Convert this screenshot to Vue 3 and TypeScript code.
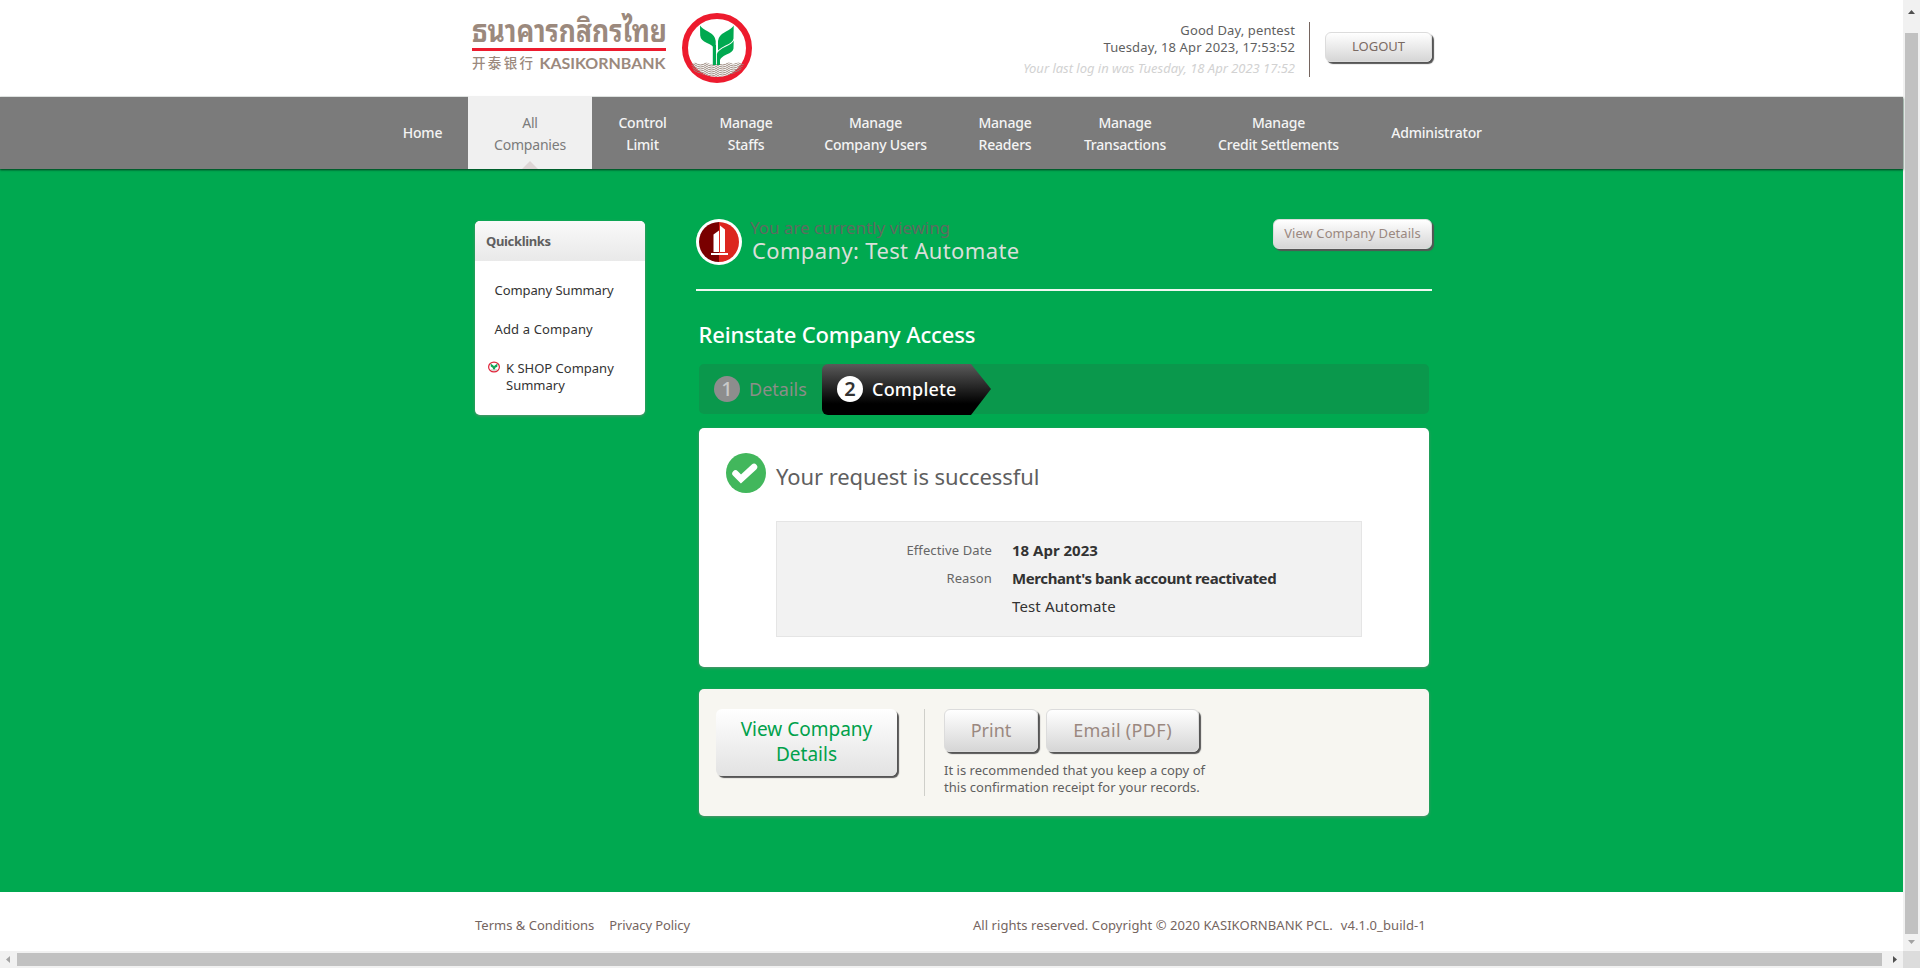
<script setup lang="ts">
interface NavItem { lines: string[]; width: number; active?: boolean }

const nav: NavItem[] = [
  { lines: ['Home'], width: 91 },
  { lines: ['All', 'Companies'], width: 124, active: true },
  { lines: ['Control', 'Limit'], width: 101 },
  { lines: ['Manage', 'Staffs'], width: 106 },
  { lines: ['Manage', 'Company Users'], width: 153 },
  { lines: ['Manage', 'Readers'], width: 106 },
  { lines: ['Manage', 'Transactions'], width: 134 },
  { lines: ['Manage', 'Credit Settlements'], width: 173 },
  { lines: ['Administrator'], width: 143 },
]

const details = [
  { label: 'Effective Date', value: '18 Apr 2023', kind: 'date' },
  { label: 'Reason', value: "Merchant's bank account reactivated", kind: 'reason' },
  { label: '', value: 'Test Automate', kind: 'plain' },
]
</script>

<template>
  <div class="window">
    <div class="page">
      <header class="header">
        <svg class="logo" width="290" height="96" viewBox="0 0 290 96">
          <g fill="#9b897d">
            <text class="thai" x="0" y="41.5" textLength="195" lengthAdjust="spacingAndGlyphs">ธนาคารกสิกรไทย</text>
            <text class="chinese" x="0" y="67.5" textLength="61">开泰银行</text>
            <text class="latin" x="67.5" y="68.5" textLength="126" lengthAdjust="spacingAndGlyphs">KASIKORNBANK</text>
          </g>
          <rect x="0" y="48" width="194" height="3" fill="#ed1b2e" />
          <clipPath id="water"><path d="M219 64q5-3 10 0 5-3 9 0h14q5-3 9 0 6-3 11 0l-4 7q-9 5-23 6-14-1-23-6z" /></clipPath>
          <circle cx="245" cy="48" r="32" fill="#fff" stroke="#ed1b2e" stroke-width="6" />
          <g clip-path="url(#water)" fill="none" stroke="#9b897d" stroke-width="1">
            <path v-for="n in 9" :key="n" :transform="`translate(0 ${(n - 1) * 2})`" d="M212 63q5.500-4 11 0t11 0 11 0 11 0 11 0 11 0" />
          </g>
          <g fill="#00a950">
            <path d="M228 25.500Q230 28.500 236 31.500 243.500 35.500 243.700 41V65H241.800V48Q241 45.500 235 43 228.500 40 228.200 35.500z" />
            <path d="M240.800 45h3.200v20h-3.200z" />
            <path d="M261.700 25.500Q260 28.500 254 31.500 246.300 35.500 246 41V50.500Q248.500 48 253.500 45.500 261 42.500 261.500 38.500z" />
            <path d="M261.700 40.500Q260.500 43.500 254 46.500 246 50 244.900 54V65H248V60Q249 57 254.500 54.500 261 52 261.500 48.500z" />
          </g>
        </svg>
        <div class="session">
          <p class="greeting">Good Day, pentest</p>
          <p class="now">Tuesday, 18 Apr 2023, 17:53:52</p>
          <p class="last">Your last log in was Tuesday, 18 Apr 2023 17:52</p>
        </div>
        <button class="btn logout">LOGOUT</button>
      </header>

      <nav class="nav">
        <a v-for="(item, i) in nav" :key="i" class="nav-item" :class="{ active: item.active, double: item.lines.length > 1 }" :style="{ width: item.width + 'px' }">
          <span v-for="line in item.lines" :key="line">{{ line }}</span>
        </a>
      </nav>

      <main class="main">
        <aside class="quick">
          <h2>Quicklinks</h2>
          <a>Company Summary</a>
          <a class="add">Add a Company</a>
          <a class="shop">
            <svg width="12" height="12" viewBox="0 0 12 12">
              <ellipse cx="6" cy="6" rx="5.400" ry="4.900" fill="#fff" stroke="#e0243a" stroke-width="1.200" />
              <path d="M2.600 2.500 5.700 4.800 6 5.500l.4-.7 3.100-2.300-.2 3.200-2 1-.4 1.900H5.200L4.700 6.700 2.800 5.500z" fill="#12a557" />
              <path d="M3 9h6" stroke="#b9b0aa" />
            </svg>
            <span>K SHOP Company<br>Summary</span>
          </a>
        </aside>

        <section class="content">
          <div class="company">
            <svg width="46" height="46" viewBox="0 0 46 46">
              <circle cx="23" cy="23" r="23" fill="#fff" />
              <path d="M23 3a20 20 0 0 0 0 40z" fill="#790000" />
              <path d="M23 3a20 20 0 0 1 0 40z" fill="#dc261f" />
              <path d="M17.500 15.500 23 11.500V33h-5.500zM24 6.500l5 4V33h-5zM15 34h17v2H15z" fill="#fff" />
            </svg>
            <div class="company-text">
              <p class="viewing">You are currently viewing</p>
              <p class="company-name">Company: Test Automate</p>
            </div>
            <button class="btn view-small">View Company Details</button>
          </div>

          <h1>Reinstate Company Access</h1>

          <div class="steps">
            <div class="step done"><b>1</b><span>Details</span></div>
            <div class="step current"><b>2</b><span>Complete</span></div>
          </div>

          <div class="card result">
            <div class="result-head">
              <svg width="40" height="40" viewBox="0 0 40 40">
                <circle cx="20" cy="20" r="20" fill="#42b75c" />
                <path d="M9.500 20.500 15 26 28 14" fill="none" stroke="#fff" stroke-width="6.500" stroke-linejoin="miter" stroke-linecap="round" />
              </svg>
              <h2>Your request is successful</h2>
            </div>
            <dl class="details">
              <div v-for="d in details" :key="d.value" class="detail">
                <dt>{{ d.label }}</dt>
                <dd :class="d.kind">{{ d.value }}</dd>
              </div>
            </dl>
          </div>

          <div class="card actions">
            <button class="btn view-big">View Company<br>Details</button>
            <div class="receipt">
              <div class="receipt-buttons">
                <button class="btn print">Print</button>
                <button class="btn email">Email (PDF)</button>
              </div>
              <p>It is recommended that you keep a copy of<br>this confirmation receipt for your records.</p>
            </div>
          </div>
        </section>
      </main>

      <footer class="footer">
        <a>Terms &amp; Conditions</a>
        <a class="privacy">Privacy Policy</a>
        <span class="rights">All rights reserved. Copyright © 2020 KASIKORNBANK PCL.</span>
        <span class="version">v4.1.0_build-1</span>
      </footer>
    </div>

    <div class="vbar">
      <svg width="17" height="33"><path d="M5 14h7l-3.500-4z" fill="#505050" /></svg>
      <i class="thumb"></i>
      <svg width="17" height="17"><path d="M5 6h7l-3.500 4z" fill="#a3a3a3" /></svg>
    </div>
    <div class="hbar">
      <svg width="17" height="17"><path d="M10 5v7l-4-3.500z" fill="#a3a3a3" /></svg>
      <i class="thumb"></i>
      <svg width="21" height="17"><path d="M11 5v7l4-3.500z" fill="#505050" /></svg>
    </div>
    <div class="corner"></div>
  </div>
</template>

<style>
body { margin: 0; overflow: hidden; }
</style>

<style scoped>
* { box-sizing: border-box; }
p, h1, h2, dl, dd, dt { margin: 0; font-weight: 400; }
.window {
  display: grid;
  grid-template: 951px 17px / 1903px 17px;
  width: 1920px;
  height: 968px;
  overflow: hidden;
  background: #fff;
  color: #5f5f5f;
  font: 13px/17px "Noto Sans", "Noto Sans CJK SC", sans-serif;
}
.page { display: flex; flex-direction: column; white-space: nowrap; }
svg { display: block; flex: none; }

.header { display: flex; height: 97px; padding-left: 472px; border-bottom: 1px solid #eee; }
.thai { font: 700 31px "Noto Sans Thai Looped", "Noto Looped Thai", Loma, Garuda, "Noto Sans Thai", "Noto Sans", sans-serif; }
.chinese { font: 500 13.500px "Noto Sans CJK SC", sans-serif; }
.latin { font: 700 15.500px Lato, sans-serif; }
.session { width: 548px; height: 55px; margin-top: 22px; padding-right: 14px; border-right: 1px solid #75655f; text-align: right; }
.greeting, .now { letter-spacing: .12px; }
.last { margin-top: 4px; color: #d2d2d2; font-style: italic; letter-spacing: -.02px; }

.btn {
  display: block;
  flex: none;
  padding: 0;
  border: 1px solid #dcdcdc;
  border-radius: 6px;
  background: linear-gradient(#fff, #d6d6d6);
  box-shadow: 2px 2px 1px #555;
  color: #9a8880;
  font: inherit;
  text-align: center;
}
.logout { width: 107px; height: 30px; margin: 32px 0 0 15px; padding-bottom: 2px; color: #7a6a63; }

.nav { display: flex; height: 72px; padding-left: 377px; background: #7b7b7b; box-shadow: 0 1px 2px #003c1c; position: relative; }
.nav-item { display: flex; flex-direction: column; align-items: center; justify-content: center; position: relative; color: #f4f4f4; font-size: 14px; font-weight: 500; line-height: 22px; letter-spacing: -.2px; }
.nav-item.double { padding-top: 2px; }
.nav-item.active { margin-top: -1px; padding-top: 3px; background: #f0f0f0; color: #7b7b7b; font-weight: 400; }
.nav-item.active::after { content: ""; position: absolute; left: 54px; bottom: 0; border: 8px solid transparent; border-top: 0; border-bottom-color: #ddd5d5; }

.main { display: flex; align-items: flex-start; height: 723px; padding: 50px 0 0 475px; background: #00a950; }
.quick { width: 170px; height: 194px; margin: 2px 51px 0 0; border-radius: 5px; background: #fff; box-shadow: 0 1px 3px #5e8f70; color: #333; }
.quick h2 { height: 40px; margin-bottom: 21px; padding-left: 11px; border-radius: 5px 5px 0 0; background: linear-gradient(#f9f9f9, #e9e9e9); color: #5f5f5f; font-size: 13px; font-weight: 700; line-height: 40px; letter-spacing: -.35px; }
.quick a { display: block; height: 39px; padding-left: 19.500px; letter-spacing: -.08px; }
.quick .add { letter-spacing: .14px; }
.quick .shop { display: flex; gap: 6px; padding-left: 13px; letter-spacing: 0; }
.shop svg { margin-top: 1px; }

.content { width: 736px; }
.company { display: flex; align-items: flex-start; height: 72px; border-bottom: 2px solid #eef8f1; }
.company-text { margin: -1px 0 0 8px; }
.viewing { color: #5f6b60; font-size: 17px; line-height: 20px; letter-spacing: -.05px; }
.company-name { margin: -1px 0 0 2px; color: #d9dfda; font-size: 22px; line-height: 26px; letter-spacing: .36px; }
.view-small { width: 159px; height: 30px; margin-left: auto; padding-bottom: 2px; letter-spacing: .08px; }
h1 { margin: 28px 0 15px 2.500px; color: #fff; font-size: 22px; font-weight: 500; line-height: 30px; letter-spacing: -.15px; }

.steps { display: flex; width: 730px; height: 50px; margin-left: 3px; border-radius: 5px; background: #0a984c; }
.step { display: flex; align-items: center; height: 50px; font-size: 18px; line-height: 50px; }
.step b { width: 26px; height: 26px; margin-right: 9px; border-radius: 50%; font-size: 20px; font-weight: 500; line-height: 26px; text-align: center; }
.done { width: 123px; padding-left: 15px; color: #8c8e88; }
.done b { background: #8d8d8d; color: #c9c9c9; }
.current { width: 169px; height: 51px; padding: 0 0 2px 15px; border-radius: 6px; background: linear-gradient(#5a5a5a, #000 78%); clip-path: polygon(0 0, 149px 0, 169px 25px, 149px 51px, 0 51px); color: #fff; font-weight: 500; letter-spacing: .2px; }
.current b { background: #fff; color: #333; font-weight: 600; }

.card { width: 730px; margin-left: 3px; border-radius: 5px; background: #fff; box-shadow: 0 1px 3px #5e8f70; }
.result { height: 239px; margin-top: 14px; padding: 25px 0 0 27px; }
.result-head { display: flex; gap: 10px; height: 68px; }
.result-head h2 { margin-top: 7px; font-size: 22px; line-height: 32px; letter-spacing: -.08px; }
.details { width: 586px; height: 116px; margin-left: 50px; padding-top: 14px; border: 1px solid #e5e5e5; background: #f2f2f2; }
.detail { display: flex; gap: 20px; height: 28px; line-height: 28px; color: #333; }
dt { width: 215px; color: #666; text-align: right; letter-spacing: .12px; }
dd { font-size: 15px; font-weight: 700; }
dd.reason { letter-spacing: -.4px; }
dd.plain { font-weight: 400; letter-spacing: .14px; }

.actions { display: flex; height: 127px; margin-top: 22px; padding: 20px 17px; background: #f7f6f1; }
.view-big { width: 181px; height: 67px; border: 0; background: linear-gradient(#fff, #e2e2e2); color: #00a14b; font-size: 19px; line-height: 25px; padding-bottom: 2px; }
.receipt { height: 87px; margin-left: 27px; padding-left: 19px; border-left: 1px solid #cfcfca; }
.receipt p { letter-spacing: .02px; }
.receipt-buttons { display: flex; gap: 8px; height: 53px; }
.receipt .btn { height: 43px; padding-bottom: 0; font-size: 18px; }
.print { width: 94px; }
.email { width: 153px; letter-spacing: .3px; }

.footer { display: flex; height: 59px; padding: 25px 0 0 475px; color: #75655f; }
.privacy { margin-left: 15px; letter-spacing: -.1px; }
.rights { margin-left: 283px; letter-spacing: .06px; }
.version { margin-left: 8px; letter-spacing: .08px; }

.vbar, .hbar { display: flex; background: #f1f1f1; }
.vbar { flex-direction: column; }
.thumb { flex: 1; background: #c1c1c1; }
.vbar .thumb { margin: 0 2px; }
.hbar { grid-row: 2; }
.hbar .thumb { margin: 2px 0; }
.corner { background: #dcdcdc; }
</style>
